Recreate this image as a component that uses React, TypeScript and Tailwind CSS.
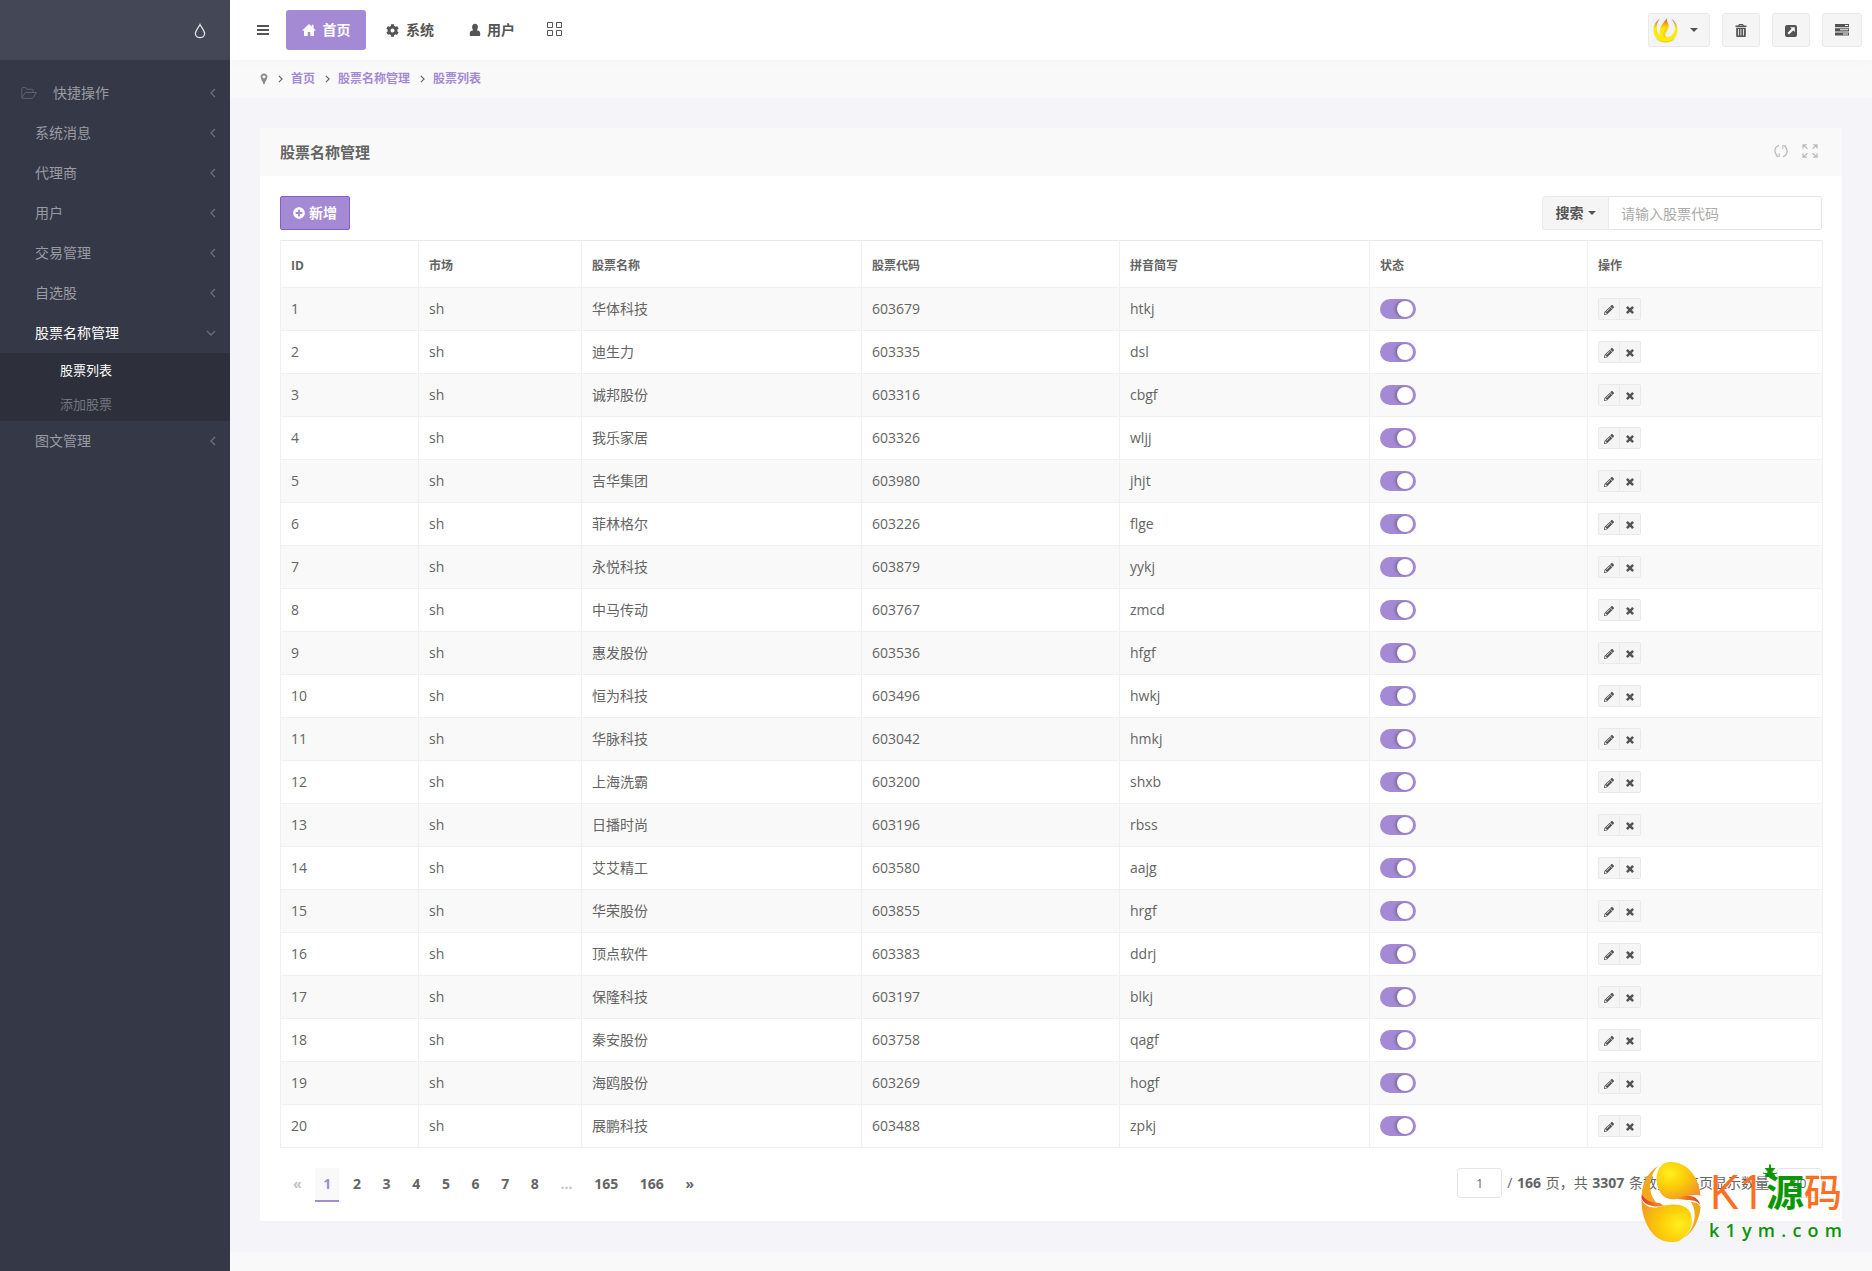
import { FaPencilAlt, FaCog, FaPlusCircle } from "react-icons/fa";

const rows: [string, string, string][] = [
  ["华体科技", "603679", "htkj"],
  ["迪生力", "603335", "dsl"],
  ["诚邦股份", "603316", "cbgf"],
  ["我乐家居", "603326", "wljj"],
  ["吉华集团", "603980", "jhjt"],
  ["菲林格尔", "603226", "flge"],
  ["永悦科技", "603879", "yykj"],
  ["中马传动", "603767", "zmcd"],
  ["惠发股份", "603536", "hfgf"],
  ["恒为科技", "603496", "hwkj"],
  ["华脉科技", "603042", "hmkj"],
  ["上海洗霸", "603200", "shxb"],
  ["日播时尚", "603196", "rbss"],
  ["艾艾精工", "603580", "aajg"],
  ["华荣股份", "603855", "hrgf"],
  ["顶点软件", "603383", "ddrj"],
  ["保隆科技", "603197", "blkj"],
  ["秦安股份", "603758", "qagf"],
  ["海鸥股份", "603269", "hogf"],
  ["展鹏科技", "603488", "zpkj"],
];

const columns = [
  { label: "ID", width: "w-[138px]" },
  { label: "市场", width: "w-[163px]" },
  { label: "股票名称", width: "w-[280px]" },
  { label: "股票代码", width: "w-[258px]" },
  { label: "拼音简写", width: "w-[250px]" },
  { label: "状态", width: "w-[218px]" },
  { label: "操作", width: "w-[235px]" },
];

function Angle({ className }: { className: string }) {
  return (
    <svg viewBox="0 0 6 10" className={className} fill="none" stroke="currentColor" strokeWidth="1.4" aria-hidden="true">
      <path d="M5 1 1 5l4 4" />
    </svg>
  );
}

function Caret() {
  return (
    <svg viewBox="0 0 8 4" className="h-1 w-2" fill="currentColor" aria-hidden="true">
      <path d="M0 0h8L4 4z" />
    </svg>
  );
}

function DropIcon() {
  return (
    <svg viewBox="0 0 12 16" className="h-4 w-3" fill="none" stroke="currentColor" strokeWidth="1.3" aria-hidden="true">
      <path d="M6 1.500C4.500 4.500 1.400 7.500 1.400 10.500a4.600 4.200 0 0 0 9.200 0C10.600 7.500 7.500 4.500 6 1.500z" />
    </svg>
  );
}

function FolderIcon() {
  return (
    <svg viewBox="0 0 16 12" className="h-3 w-4" fill="none" stroke="currentColor" strokeWidth="1" strokeLinejoin="round" aria-hidden="true">
      <path d="M.8 10.500V1.500c0-.5.3-.9.900-.9h3c.6 0 .9.4.9.900v.8h5.600c.6 0 .9.4.9.900v2" />
      <path d="M.8 10.800 4.200 5.500h11.200l-3.200 5.100c-.3.500-.7.800-1.300.8H1.600c-.4 0-.7-.2-.8-.6z" />
    </svg>
  );
}

function GridIcon() {
  return (
    <svg viewBox="0 0 15 14" className="h-3.5 w-[15px]" fill="none" stroke="currentColor" strokeWidth="1" aria-hidden="true">
      <path d="M.5.5h5v5h-5zM9.500.5h5v5h-5zM.5 8.500h5v5h-5zM9.500 8.500h5v5h-5z" />
    </svg>
  );
}

function RefreshIcon() {
  return (
    <svg viewBox="0 0 14 14" className="size-3.5" fill="none" stroke="currentColor" strokeWidth="1.300" aria-hidden="true">
      <path d="M5 1.300C2.600 2 .9 4.200.9 7c0 2 1 3.800 2.600 4.900M9 12.700c2.400-.7 4.100-2.900 4.100-5.700 0-2-1-3.800-2.600-4.900" />
      <path d="M1.800 12.300h3.400V9.200M12.200 1.700H8.800v3.100" strokeWidth="1.100" />
    </svg>
  );
}

function FullscreenIcon() {
  return (
    <svg viewBox="0 0 16 14" className="h-3.5 w-4" fill="none" stroke="currentColor" strokeWidth="1.300" aria-hidden="true">
      <path d="M1 4.500V.8h4M1 .8l4.500 4M15 4.500V.8h-4M15 .8l-4.500 4M1 9.500v3.700h4M1 13.200l4.500-4M15 9.500v3.700h-4M15 13.200l-4.500-4" />
    </svg>
  );
}

function HomeIcon() {
  return (
    <svg viewBox="0 0 14 12" className="h-3 w-3.5" fill="currentColor" aria-hidden="true">
      <path d="M7 0 0 6.600h2V12h3.700V8h2.600v4H12V6.600h2L11.600 4.300V.8H9.800v1.800z" />
    </svg>
  );
}

function UserIcon() {
  return (
    <svg viewBox="0 0 12 14" className="h-3.5 w-3" fill="currentColor" aria-hidden="true">
      <path d="M6 .8c1.900 0 2.900 1.400 2.900 3.200 0 1.500-.6 2.600-1.200 3.200 1.600.2 3.500 1 3.500 2.800v2c0 .6-.4 1-1 1H1.800c-.6 0-1-.4-1-1v-2c0-1.800 1.900-2.600 3.500-2.800C3.700 6.600 3.100 5.500 3.100 4 3.100 2.200 4.100.8 6 .8z" />
    </svg>
  );
}

function TrashIcon() {
  return (
    <svg viewBox="0 0 12 13" className="h-[13px] w-3" fill="currentColor" aria-hidden="true">
      <path fillRule="evenodd" d="M4 0h4l.8 1.500H11.500V3H.5V1.500h2.700zM4.600.9l-.3.6h3.400l-.3-.6zM1.200 3.800h9.600V12c0 .6-.4 1-1 1H2.200c-.6 0-1-.4-1-1zM3 5v6.500h.9V5zm2.500 0v6.500h.9V5zM8 5v6.500h.9V5z" />
    </svg>
  );
}

function ExpandSquareIcon() {
  return (
    <svg viewBox="0 0 12 12" className="size-3" aria-hidden="true">
      <rect width="12" height="12" rx="2" fill="currentColor" />
      <path d="M5 2.200h4.800V7L8.200 5.400 4 9.600 2.400 8l4.200-4.200z" fill="#f5f5f5" />
    </svg>
  );
}

function TasksIcon() {
  return (
    <svg viewBox="0 0 14 12" className="mb-0.5 h-3 w-3.5" aria-hidden="true">
      <path d="M0 0h14v3.200H0zM0 4.200h14v3.200H0zM0 8.400h14v3.200H0z" fill="currentColor" />
      <path d="M10 1.100h3v1h-3zM5 5.300h8v1H5zM8 9.500h5v1H8z" fill="#f5f5f5" />
    </svg>
  );
}

function PinIcon() {
  return (
    <svg viewBox="0 0 8 12" className="h-3 w-2" fill="currentColor" aria-hidden="true">
      <path fillRule="evenodd" d="M4 .5c2 0 3.400 1.400 3.400 3.300C7.400 5.700 5.300 8.500 4.500 11c-.1.400-.9.400-1 0C2.700 8.500.6 5.700.6 3.800.6 1.900 2 .5 4 .5zm0 1.700a1.600 1.600 0 1 0 0 3.200 1.600 1.600 0 0 0 0-3.200z" />
    </svg>
  );
}

function CrossIcon() {
  return (
    <svg viewBox="0 0 9 9" className="size-2" fill="none" stroke="currentColor" strokeWidth="2.800" aria-hidden="true">
      <path d="M1 1l7 7M8 1 1 8" />
    </svg>
  );
}

function FlameAvatar() {
  return (
    <svg viewBox="0 0 25 26" className="h-[26px] w-[25px] bg-[#eef3fb]" aria-hidden="true">
      <defs>
        <linearGradient id="flame" x1="0" y1="0" x2="0" y2="1">
          <stop offset="0" stopColor="#d8401c" />
          <stop offset=".22" stopColor="#f2a012" />
          <stop offset=".42" stopColor="#fce80c" />
          <stop offset="1" stopColor="#fdea08" />
        </linearGradient>
      </defs>
      <path d="M6.500 2C2.500 4.500.4 8.500.5 13 .7 20 6 25.600 12.500 25.600S24.300 20 24.500 13C24.600 8.500 22.500 4.500 18.500 2c3 3.500 4.300 7.500 3.300 11.500-.8 3.300-3 5.500-6.300 6.300-2 .4-3.500-.3-3.700-2 -.3-2.500 3.400-3.800 4-7.300.3-3.500-2-5.500-2.300-9.500-1.500 4-5.500 6.500-6.500 11-.6 2.500-.3 4 .3 6.500C4 16.500 1.500 8.500 6.500 2z" fill="url(#flame)" />
      <path d="M13.500 9c.3 3-3.500 5-3.300 9 .2 1.500 1 2.500 2.200 3-.8-4.500 3.100-6 1.100-12z" fill="#f3a416" opacity=".35" />
      <path d="M3 21c5 4.500 14 4.500 19 0-2 3.500-6 4.600-9.500 4.600S5 24.500 3 21z" fill="#e0b80a" opacity=".5" />
    </svg>
  );
}

function NavItem({ label, active = false }: { label: string; active?: boolean }) {
  return (
    <li>
      <a href="#" className={active ? "flex h-10 items-center justify-between pr-4 pl-[35px] text-white" : "flex h-10 items-center justify-between pr-3.5 pl-[35px]"}>
        <span>{label}</span>
        <Angle className={active ? "h-2.5 w-1.5 -rotate-90 text-[#6b6e7a]" : "h-2.5 w-1.5 text-[#6b6e7a]"} />
      </a>
    </li>
  );
}

function Sidebar() {
  return (
    <aside className="w-[230px] shrink-0 bg-[#353847] text-[#9a9ba3]">
      <div className="flex h-[60px] items-center justify-end bg-[#444756] pt-0.5 pr-6 text-[#e0e1e5]">
        <button type="button" aria-label="主题">
          <DropIcon />
        </button>
      </div>
      <nav className="pt-[13px]">
        <ul>
          <li>
            <a href="#" className="flex h-10 items-center pr-3.5 pl-[21px]">
              <span className="text-[#5f626f]"><FolderIcon /></span>
              <span className="ml-4 grow">快捷操作</span>
              <Angle className="h-2.5 w-1.5 text-[#6b6e7a]" />
            </a>
          </li>
          <NavItem label="系统消息" />
          <NavItem label="代理商" />
          <NavItem label="用户" />
          <NavItem label="交易管理" />
          <NavItem label="自选股" />
          <NavItem label="股票名称管理" active />
          <li>
            <ul className="bg-[#2d2f3b] text-[13px]">
              <li><a href="#" className="flex h-[34px] items-center pl-[60px] text-white">股票列表</a></li>
              <li><a href="#" className="flex h-[34px] items-center pl-[60px] text-[#74767f]">添加股票</a></li>
            </ul>
          </li>
          <NavItem label="图文管理" />
        </ul>
      </nav>
    </aside>
  );
}

const toolButton = "flex h-[34px] items-center justify-center rounded-[3px] border border-[#e9e9e9] bg-[#f5f5f5] pt-px text-[#545454]";

function TopBar() {
  return (
    <header className="relative flex h-[60px] items-center bg-white pr-2.5 pl-[27px] font-semibold text-[#545454] shadow-[0_2px_10px_rgba(0,0,0,0.02)]">
      <button type="button" aria-label="菜单" className="mr-[17px]">
        <svg viewBox="0 0 12 10" className="h-2.5 w-3" fill="currentColor" aria-hidden="true">
          <path d="M0 0h12v2H0zM0 4h12v2H0zM0 8h12v2H0z" />
        </svg>
      </button>
      <nav className="flex items-center">
        <a href="#" className="flex h-10 w-20 items-center justify-center gap-[7px] rounded-[3px] bg-[#a48ad4] text-white">
          <HomeIcon />首页
        </a>
        <a href="#" className="ml-5 flex items-center gap-[7px]"><FaCog className="size-[13px]" />系统</a>
        <a href="#" className="ml-[35px] flex items-center gap-1.5"><UserIcon />用户</a>
        <a href="#" aria-label="模块" className="mb-0.5 ml-8"><GridIcon /></a>
      </nav>
      <div className="ml-auto flex gap-3">
        <button type="button" aria-label="账户" className="flex h-[34px] w-[62px] items-center gap-3 rounded-[3px] border border-[#e9e9e9] bg-[#f5f5f5] pl-1 text-[#545454]"><FlameAvatar /><Caret /></button>
        <button type="button" aria-label="清空缓存" className={toolButton + " w-[38px]"}><TrashIcon /></button>
        <button type="button" aria-label="打开首页" className={toolButton + " w-[38px]"}><ExpandSquareIcon /></button>
        <button type="button" aria-label="侧栏" className={toolButton + " w-10"}><TasksIcon /></button>
      </div>
    </header>
  );
}

function Breadcrumb() {
  return (
    <nav aria-label="breadcrumb" className="flex h-[38px] items-center bg-[#f9f9f9] pl-[30px] text-xs font-semibold text-[#a48ad4]">
      <span className="text-[#8a8a8a]"><PinIcon /></span>
      {["首页", "股票名称管理", "股票列表"].map((label) => (
        <span key={label} className="flex items-center">
          <Angle className="mr-2 ml-2.5 h-2 w-[5px] rotate-180 text-[#646464]" />
          <a href="#">{label}</a>
        </span>
      ))}
    </nav>
  );
}

function StockTable() {
  return (
    <table className="mt-2.5 w-full table-fixed border-collapse border border-[#f0f0f0] text-left">
      <thead>
        <tr className="h-[47px] border-t border-b border-[#e9e9e9]">
          {columns.map((column) => (
            <th key={column.label} scope="col" className={column.width + " border-x border-[#f0f0f0] px-2.5 pt-1 text-xs font-semibold"}>
              {column.label === "ID" ? <b className="font-bold">{column.label}</b> : column.label}
            </th>
          ))}
        </tr>
      </thead>
      <tbody>
        {rows.map(([name, code, pinyin], index) => (
          <tr key={code} className="h-[43px] odd:bg-[#f9f9f9]">
            <td className="border border-[#f0f0f0] px-2.5">{index + 1}</td>
            <td className="border border-[#f0f0f0] px-2.5">sh</td>
            <td className="border border-[#f0f0f0] px-2.5">{name}</td>
            <td className="border border-[#f0f0f0] px-2.5">{code}</td>
            <td className="border border-[#f0f0f0] px-2.5">{pinyin}</td>
            <td className="border border-[#f0f0f0] px-2.5">
              <label className="relative block h-5 w-9">
                <input type="checkbox" defaultChecked aria-label={name + " 状态"} className="peer absolute inset-0 size-full cursor-pointer appearance-none rounded-full bg-[#dddddd] checked:bg-[#a48ad4]" />
                <span className="pointer-events-none absolute top-0.5 left-0.5 size-4 rounded-full bg-white peer-checked:left-[17px] peer-checked:shadow-[-2px_0_3px_rgba(0,0,0,0.25)]" />
              </label>
            </td>
            <td className="border border-[#f0f0f0] px-2.5">
              <div className="flex text-[#545454]">
                <button type="button" aria-label="编辑" className="flex h-[22px] w-[22px] items-center justify-center rounded-l-xs border border-[#e9e9e9] bg-[#f5f5f5] pt-0.5">
                  <FaPencilAlt className="size-2.5" />
                </button>
                <button type="button" aria-label="删除" className="flex h-[22px] w-[21px] items-center justify-center rounded-r-xs border border-l-0 border-[#e9e9e9] bg-[#f5f5f5] pt-0.5">
                  <CrossIcon />
                </button>
              </div>
            </td>
          </tr>
        ))}
      </tbody>
    </table>
  );
}

function Pagination() {
  const items = ["«", "1", "2", "3", "4", "5", "6", "7", "8", "...", "165", "166", "»"];
  return (
    <div className="mt-5 flex items-start justify-between">
      <nav aria-label="分页" className="pl-[5px] font-bold">
        {items.map((item) => {
          if (item === "«" || item === "...") {
            return <span key={item}><span className="mr-0.5 inline-block h-[34px] px-2 leading-8 text-[#c3c3c3]">{item}</span>{" "}</span>;
          }
          if (item === "1") {
            return <span key={item}><a href="#" aria-current="page" className="mr-0.5 inline-block h-[34px] border-b-2 border-[#a48ad4] bg-[#f9f9f9] px-2 leading-8 text-[#a48ad4]">{item}</a>{" "}</span>;
          }
          return <span key={item}><a href="#" className="mr-0.5 inline-block h-[34px] px-2 leading-8">{item}</a>{" "}</span>;
        })}
      </nav>
      <div className="flex items-center">
        <input aria-label="页码" defaultValue="1" className="h-[30px] w-[45px] rounded-[3px] border border-[#e6e6e6] bg-white text-center text-xs" />
        <span className="ml-[5px]">/ <b className="mx-px font-bold">166</b> 页，共 <b className="mx-px font-bold">3307</b> 条数据，每页显示数量</span>
        <input aria-label="每页显示数量" defaultValue="20" className="ml-2 h-[30px] w-[45px] rounded-[3px] border border-[#e6e6e6] bg-white text-center text-xs" />
      </div>
    </div>
  );
}

function Watermark() {
  return (
    <div className="pointer-events-none absolute right-[30px] bottom-[29px] flex items-start">
      <svg viewBox="0 0 60 80" className="h-20 w-[60px]" aria-hidden="true">
        <defs>
          <radialGradient id="orbTop" cx=".3" cy=".3" r=".8">
            <stop offset="0" stopColor="#fff01e" />
            <stop offset=".5" stopColor="#fcca08" />
            <stop offset="1" stopColor="#f0962a" />
          </radialGradient>
          <radialGradient id="orbBottom" cx=".75" cy=".6" r=".8">
            <stop offset="0" stopColor="#fff01e" />
            <stop offset=".5" stopColor="#fcca08" />
            <stop offset="1" stopColor="#f3a01f" />
          </radialGradient>
          <linearGradient id="emberLeft" x1="0" y1="0" x2="1" y2="0">
            <stop offset="0" stopColor="#e4332a" />
            <stop offset="1" stopColor="#f5a01e" />
          </linearGradient>
          <linearGradient id="emberRight" x1="0" y1="0" x2="1" y2="0">
            <stop offset="0" stopColor="#f5a01e" />
            <stop offset="1" stopColor="#e4332a" />
          </linearGradient>
        </defs>
        <path d="M17 4C7 10 1 21 .8 33 3 39 9 42 17 42 6 32 7 15 17 4z" fill="#f3a81a" />
        <path d="M.8 32C4 39 11 41 19 41l4 3C13 46 3 43 .5 36z" fill="url(#emberLeft)" />
        <path d="M30 0c16 0 28.500 15 29.500 34C56 32 48 33 41 36c-9 3-18 1-22-6C13 19 15 8 22 2c2.500-1.500 5-2 8-2z" fill="url(#orbTop)" />
        <path d="M36 37c8-5 21-5 23.500 7C58 40 54 38 46 38z" fill="url(#emberRight)" />
        <path d="M.5 36C3 46 12 47 22 44c12-3 24-2 28 8 3 11-2 21-12 27-2 .8-5 1-8 1C12 80 0 60 .5 36z" fill="url(#orbBottom)" />
        <path d="M43 76c11-10 14-25 7-36 5 0 9 2 9.500 6C58 59 52 70 43 76z" fill="#f3a81a" />
      </svg>
      <div className="ml-2 w-[133px]">
        <div className="flex h-[58px] items-center justify-between leading-none text-[#ff6f22]">
          <span className="text-[48px]">K1</span>
          <span className="relative text-[38px] font-bold text-[#0b9605]">
            源
            <svg viewBox="0 0 16 16" className="absolute -top-2 -left-1 size-4" stroke="currentColor" strokeWidth="1" fill="currentColor" aria-hidden="true">
              <path d="M8 0v9M3 4l5 6 5-6M1 9l7 2 7-2" />
              <path d="M7.200 3.500 8 1l.8 2.500zM3.500 12.500a4.500 4.500 0 0 1 9 0z" />
            </svg>
          </span>
          <span className="text-[38px] font-medium">码</span>
        </div>
        <div aria-label="k1ym.com" className="flex justify-between text-lg leading-5 font-semibold text-[#0b9605]">
          {[..."k1ym.com"].map((letter, index) => <span key={index}>{letter}</span>)}
        </div>
      </div>
    </div>
  );
}

export default function App() {
  return (
    <div className="relative flex min-h-screen bg-[#f9f9f9] font-['Open_Sans','Noto_Sans_CJK_SC',sans-serif] text-sm leading-5 text-[#646464]">
      <Sidebar />
      <div className="min-w-0 grow">
        <TopBar />
        <Breadcrumb />
        <main className="bg-[#f5f5f9] p-[30px] pb-[31px]">
          <section className="bg-white shadow-[0_2px_2px_rgba(0,0,0,0.01)]">
            <div className="flex h-12 items-center justify-between bg-[#f9f9f9] px-5">
              <h1 className="text-[15px] font-semibold">股票名称管理</h1>
              <div className="mb-0.5 flex gap-3.5 pr-1 text-[#bcbcbc]">
                <button type="button" aria-label="刷新"><RefreshIcon /></button>
                <button type="button" aria-label="全屏"><FullscreenIcon /></button>
              </div>
            </div>
            <div className="px-5 pt-5 pb-[19px]">
              <div className="flex justify-between">
                <button type="button" className="flex h-[34px] w-[70px] items-center justify-center gap-1 rounded-xs border border-[#8661c5] bg-[#a48ad4] font-bold text-white">
                  <FaPlusCircle className="size-3" />新增
                </button>
                <div className="flex">
                  <button type="button" className="flex h-[34px] w-[67px] items-center justify-center gap-1 rounded-l-[3px] border border-[#e9e9e9] bg-[#f5f5f5] font-semibold text-[#545454]">
                    搜索<Caret />
                  </button>
                  <input type="text" aria-label="搜索" placeholder="请输入股票代码" className="h-[34px] w-[213px] rounded-r-[3px] border border-l-0 border-[#e6e6e6] bg-white px-3 placeholder:text-[#aaaaaa]" />
                </div>
              </div>
              <StockTable />
              <Pagination />
            </div>
          </section>
        </main>
      </div>
      <Watermark />
    </div>
  );
}
